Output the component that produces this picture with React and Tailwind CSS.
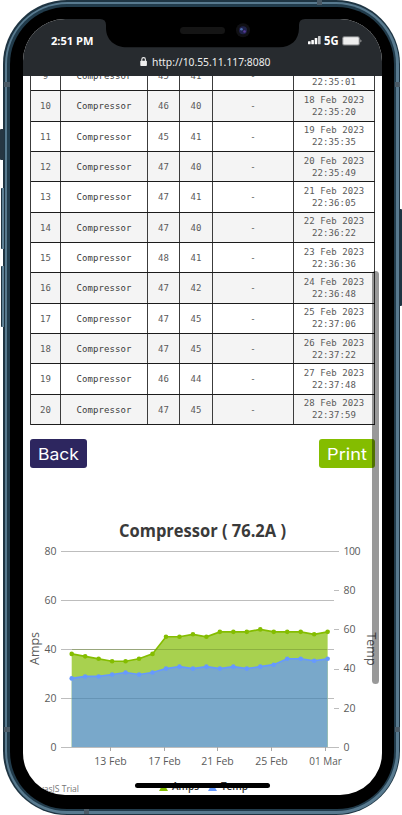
import React from "react";

const rows = [
  [9, 45, 41, "17 Feb 2023", "22:35:01"],
  [10, 46, 40, "18 Feb 2023", "22:35:20"],
  [11, 45, 41, "19 Feb 2023", "22:35:35"],
  [12, 47, 40, "20 Feb 2023", "22:35:49"],
  [13, 47, 41, "21 Feb 2023", "22:36:05"],
  [14, 47, 40, "22 Feb 2023", "22:36:22"],
  [15, 48, 41, "23 Feb 2023", "22:36:36"],
  [16, 47, 42, "24 Feb 2023", "22:36:48"],
  [17, 47, 45, "25 Feb 2023", "22:37:06"],
  [18, 47, 45, "26 Feb 2023", "22:37:22"],
  [19, 46, 44, "27 Feb 2023", "22:37:48"],
  [20, 47, 45, "28 Feb 2023", "22:37:59"],
];

const amps = [38, 37, 36, 35, 35, 36, 38, 45, 45, 46, 45, 47, 47, 47, 48, 47, 47, 47, 46, 47];
const temps = [35, 36, 36, 37, 38, 37, 38, 40, 41, 40, 41, 40, 41, 40, 41, 42, 45, 45, 44, 45];

function Cell({ children, className = "pt-[2px]" }) {
  return (
    <div className={`flex items-center justify-center border-r border-[#3c3c3c] ${className}`}>
      {children}
    </div>
  );
}

function LogTable() {
  return (
    <div className="ml-[7px] w-[345px] border-l border-[#3c3c3c] font-['DejaVu_Sans_Mono',monospace] text-[9px] tracking-[0.08px] text-[#5a5a5a]">
      {rows.map(([n, a, t, date, time]) => (
        <div
          key={n}
          className="grid h-[30.33px] grid-cols-[30px_87px_32px_33px_81px_81px] border-b border-[#1c1c1c] odd:bg-white even:bg-[#f4f4f4]"
        >
          <Cell>{n}</Cell>
          <Cell className="pt-[2px] text-[#3a3a3a]">Compressor</Cell>
          <Cell>{a}</Cell>
          <Cell>{t}</Cell>
          <Cell>-</Cell>
          <Cell className="flex-col leading-[12px]">
            <span>{date}</span>
            <span>{time}</span>
          </Cell>
        </div>
      ))}
    </div>
  );
}

// Chart coordinates share the phone's own pixel grid; the viewBox offsets them.
const px = (i) => 71.7 + i * 13.47;
const ampY = (v) => 747 - v * 2.45;
const tempY = (v) => 747 - v * 1.96;

function Series({ data, y, line, fill }) {
  const pts = data.map((v, i) => `${px(i)},${y(v)}`).join(" ");
  return (
    <g>
      <polygon points={`${px(0)},747 ${pts} ${px(19)},747`} fill={fill} />
      <polyline points={pts} fill="none" stroke={line} strokeWidth="1.7" />
      {data.map((v, i) => (
        <circle key={i} cx={px(i)} cy={y(v)} r="2.3" fill={line} />
      ))}
    </g>
  );
}

function Chart() {
  return (
    <svg
      className="block font-['Open_Sans',sans-serif]"
      width="359"
      height="282"
      viewBox="23 512 359 282"
      fill="#5b5b5b"
    >
      <text x="119" y="537" fontSize="17" fontWeight="700" fill="#3a3a3a" textLength="167" lengthAdjust="spacingAndGlyphs">
        Compressor ( 76.2A )
      </text>
      {[80, 60, 40, 20].map((v) => (
        <line key={v} x1="61" x2={v === 80 ? 339 : 334} y1={ampY(v) + 0.5} y2={ampY(v) + 0.5} stroke="#bdbdbd" />
      ))}
      <line x1="61" x2="339" y1="747.5" y2="747.5" stroke="#bdbdbd" />
      {[20, 40, 60, 80].map((v) => (
        <line key={v} x1="334" x2="339" y1={Math.round(tempY(v)) + 0.5} y2={Math.round(tempY(v)) + 0.5} stroke="#bdbdbd" />
      ))}
      <Series data={amps} y={ampY} line="#84bd00" fill="#a8d14f" />
      <Series data={temps} y={tempY} line="#6699ff" fill="#79a8ca" />
      <line x1="72" x2="327" y1="649.5" y2="649.5" stroke="#6b8a2d" strokeOpacity="0.45" />
      <line x1="72" x2="327" y1="698.5" y2="698.5" stroke="#4a7595" strokeOpacity="0.4" />
      {[80, 60, 40, 20, 0].map((v) => (
        <text key={v} x="56.5" y={ampY(v) + 3.7} fontSize="10.5" textAnchor="end">{v}</text>
      ))}
      {[100, 80, 60, 40, 20, 0].map((v) => (
        <text key={v} x="343.5" y={tempY(v) + 3.7} fontSize="10.5" textLength={v === 100 ? 17 : undefined}>{v}</text>
      ))}
      {[[110.5, "13 Feb"], [164.5, "17 Feb"], [217.5, "21 Feb"], [271.5, "25 Feb"], [325.5, "01 Mar"]].map(([x, label]) => (
        <g key={label}>
          <line x1={x} x2={x} y1="747" y2="751" stroke="#a8a8a8" />
          <text x={x} y="765" fontSize="10.7" textAnchor="middle" textLength="32.5" lengthAdjust="spacingAndGlyphs">{label}</text>
        </g>
      ))}
      <text transform="translate(38.5 665) rotate(-90)" fontSize="13" textLength="33" lengthAdjust="spacingAndGlyphs">Amps</text>
      <text transform="translate(366.5 632.5) rotate(90)" fontSize="13" textLength="33" lengthAdjust="spacingAndGlyphs">Temp</text>
      <path d="M159 791 L163.5 783 L168 791Z" fill="#84bd00" />
      <path d="M208 791 L212.5 783 L217 791Z" fill="#6699ff" />
      <g fontSize="10" fontWeight="600" fill="#333">
        <text x="172" y="789.5" textLength="27" lengthAdjust="spacingAndGlyphs">Amps</text>
        <text x="221" y="789.5" textLength="27" lengthAdjust="spacingAndGlyphs">Temp</text>
      </g>
      <text x="24" y="792" fontSize="8.6" fill="#777" textLength="55" lengthAdjust="spacingAndGlyphs">CanvasJS Trial</text>
    </svg>
  );
}

function StatusBar() {
  return (
    <header className="relative h-[57px] shrink-0 bg-[#272b2f] font-['Noto_Sans','Open_Sans',sans-serif] text-white">
      <svg className="absolute left-[75px] top-0" width="208" height="29" viewBox="98 19 208 29">
        <path d="M98 19 H100 Q106 19 106 25 V28 C106 40 115 47.3 127 47.3 H279 C291 47.3 299 40 299 28 V25 Q299 19 305 19Z" fill="#000" />
        <rect x="180" y="27" width="45" height="7" rx="3.5" fill="#151515" />
        <circle cx="243" cy="30.3" r="7" fill="#101014" />
        <circle cx="243" cy="30.3" r="4" fill="#20224a" />
        <circle cx="241.5" cy="29.2" r="1.3" fill="#4d6dad" />
        <circle cx="244.5" cy="31.5" r="1.3" fill="#563b9a" />
      </svg>
      <div className="flex h-[43px] items-center justify-between pl-[27.5px] pr-[20px]">
        <svg width="44" height="14">
          <text x="0" y="11" fontSize="11" fontWeight="700" fill="#fff" textLength="42.5" lengthAdjust="spacingAndGlyphs">2:51 PM</text>
        </svg>
        <div className="flex items-center">
          <svg width="55" height="14" viewBox="307 35 55 14" fill="#fff">
            <rect x="308" y="42.3" width="2.6" height="3" rx=".5" />
            <rect x="311.3" y="41" width="2.6" height="4.3" rx=".5" />
            <rect x="314.7" y="39" width="2.6" height="6.3" rx=".5" />
            <rect x="318" y="37" width="2.6" height="8.3" rx=".5" opacity=".75" />
            <text x="324" y="46" fontSize="11.5" fontWeight="700" textLength="14.5" lengthAdjust="spacingAndGlyphs">5G</text>
            <rect x="342.2" y="37.2" width="17.6" height="9.4" rx="2.2" fill="#8b8d8f" />
            <rect x="343.3" y="38.2" width="15.4" height="7.4" rx="1.4" fill="#eee" />
            <path d="M360.5 40.2 q1.8 1.7 0 3.4Z" fill="#ccc" />
          </svg>
        </div>
      </div>
      <div className="-mt-[8px] ml-[116px] flex items-center">
        <svg width="136" height="16" viewBox="139 54 136 16" fill="#eee">
          <rect x="140.3" y="60.7" width="6.6" height="5.3" rx=".8" />
          <path d="M141.8 61 V59.5 a1.8 1.9 0 0 1 3.6 0 V61" fill="none" stroke="#eee" strokeWidth="1.1" />
          <text x="152" y="66" fontSize="11" textLength="118.5" lengthAdjust="spacingAndGlyphs">http://10.55.11.117:8080</text>
        </svg>
      </div>
    </header>
  );
}

function Button({ label, className, width }) {
  return (
    <button className={`flex h-[29px] items-center justify-center rounded-[3px] ${className}`}>
      <svg width={width} height="24" className="font-['Inter',sans-serif]">
        <text x="0" y="17.7" fontSize="16.5" fill="#fff" textLength={width} lengthAdjust="spacingAndGlyphs">{label}</text>
      </svg>
    </button>
  );
}

export default function App() {
  return (
    <div className="relative h-[815px] w-[402px] overflow-hidden bg-white pl-[3px]">
      <div className="absolute left-0 top-[129px] h-[31px] w-[4px] rounded-l-[1px] bg-[#263642]" />
      <div className="absolute left-[1px] top-[188px] h-[61px] w-[3px] rounded-l-[1px] border-l border-[#1e3442] bg-[#5d8095]" />
      <div className="absolute left-[1px] top-[266px] h-[61px] w-[3px] rounded-l-[1px] border-l border-[#1e3442] bg-[#5d8095]" />
      <div className="absolute left-[399px] top-[209px] h-[97px] w-[3px] rounded-r-[1px] bg-[#1e3442]" />
      <div className="h-[815px] w-[397px] rounded-[64px] bg-[#1e3442] p-[1.5px]">
        <div className="h-full rounded-[62.5px] bg-[#587a8f] p-[2.5px]">
          <div className="h-full rounded-[60px] bg-[#213b4b] p-[2.5px]">
            <div className="flex h-full rounded-[57px] bg-black pl-[13.5px] pt-[12.5px]">
              <main className="relative flex h-[775.5px] w-[358.5px] flex-col overflow-hidden rounded-[42px] bg-white">
                <StatusBar />
                <div className="h-[718px] overflow-hidden">
                  <div className="-mt-[15px]">
                    <LogTable />
                  </div>
                  <div className="ml-[7px] mt-[14.5px] flex w-[345px] justify-between">
                    <Button label="Back" width={41} className="w-[57px] bg-[#2d265f]" />
                    <Button label="Print" width={40} className="w-[56px] bg-[#84bd00]" />
                  </div>
                  <div className="mt-[43.5px]">
                    <Chart />
                  </div>
                </div>
                <div className="absolute left-[349px] top-[252px] h-[413px] w-[6.5px] rounded-full bg-black/40" />
                <div className="absolute left-[112px] top-[764px] h-[5px] w-[135px] rounded-full bg-black" />
              </main>
            </div>
          </div>
        </div>
      </div>
      <div className="absolute left-[4px] top-[82px] h-[5px] w-[6px] bg-[#4a5a66]" />
      <div className="absolute left-[4px] top-[727px] h-[5px] w-[6px] bg-[#4a5a66]" />
      <div className="absolute left-[395px] top-[82px] h-[5px] w-[5px] bg-[#4a5a66]" />
      <div className="absolute left-[395px] top-[727px] h-[5px] w-[5px] bg-[#4a5a66]" />
      <div className="absolute left-[317px] top-0 h-[5px] w-[5px] bg-[#4a5a66]" />
      <div className="absolute left-[84px] top-[809px] h-[5px] w-[5px] bg-[#4a5a66]" />
    </div>
  );
}
